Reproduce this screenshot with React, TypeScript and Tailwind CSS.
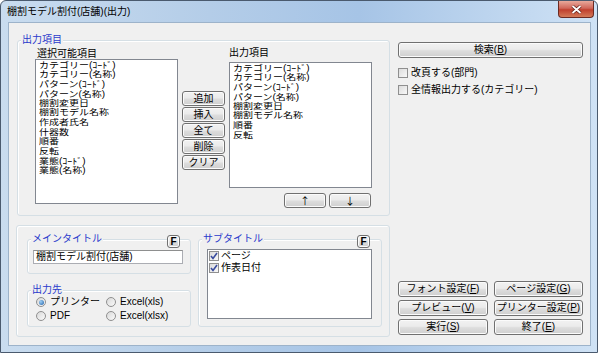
import React from "react";

const leftItems = [
  "カテゴリー(ｺｰﾄﾞ)",
  "カテゴリー(名称)",
  "パターン(ｺｰﾄﾞ)",
  "パターン(名称)",
  "棚割変更日",
  "棚割モデル名称",
  "作成者氏名",
  "什器数",
  "順番",
  "反転",
  "業態(ｺｰﾄﾞ)",
  "業態(名称)",
];

const rightItems = [
  "カテゴリー(ｺｰﾄﾞ)",
  "カテゴリー(名称)",
  "パターン(ｺｰﾄﾞ)",
  "パターン(名称)",
  "棚割変更日",
  "棚割モデル名称",
  "順番",
  "反転",
];

function Btn({ children, className = "" }: { children: React.ReactNode; className?: string }) {
  return (
    <div
      className={`flex items-center justify-center rounded-[3px] border border-[#707070] bg-[linear-gradient(#f2f2f2,#ebebeb_45%,#dddddd_55%,#cfcfcf)] text-[10px] leading-none text-black shadow-[inset_0_0_0_1px_#fbfbfb] ${className}`}
    >
      {children}
    </div>
  );
}

// listbox rows are packed tight in the original, so squash the text a bit
function ListBox({ items, className = "" }: { items: string[]; className?: string }) {
  return (
    <div className={`overflow-hidden border border-[#828790] bg-white pl-[3px] text-black ${className}`}>
      <div className="origin-top scale-y-[0.85] text-[10px] leading-[11.3px]">
        {items.map((it, i) => (
          <div key={i} className="whitespace-nowrap">
            {it}
          </div>
        ))}
      </div>
    </div>
  );
}

function Group({
  label,
  className = "",
  children,
  f,
  fRight = "right-[10px]",
}: {
  label: string;
  className?: string;
  children?: React.ReactNode;
  f?: boolean;
  fRight?: string;
}) {
  return (
    <div className={`relative rounded-[3px] border border-[#d5dfe5] shadow-[inset_1px_1px_0_#ffffff] ${className}`}>
      <span className="absolute left-[3px] top-[-7px] bg-[#f0f0f0] px-[1px] text-[10px] leading-[12px] text-[#2a3acc]">
        {label}
      </span>
      {f && (
        <Btn className={`absolute top-[-5px] h-[13px] w-[13px] font-bold ${fRight}`}>F</Btn>
      )}
      {children}
    </div>
  );
}

function Check({ checked = false }: { checked?: boolean }) {
  return (
    <div className="flex h-[10px] w-[10px] shrink-0 items-center justify-center border border-[#8f8f8f] bg-[linear-gradient(135deg,#dcdcdc,#f8f8f8)]">
      {checked && (
        <svg width="8" height="8" viewBox="0 0 8 8">
          <path d="M1 4 L3 6.5 L7 1" stroke="#3a4c9e" strokeWidth="1.6" fill="none" />
        </svg>
      )}
    </div>
  );
}

function Radio({ checked = false }: { checked?: boolean }) {
  return (
    <div className="flex h-[10px] w-[10px] shrink-0 items-center justify-center rounded-full border border-[#8f8f8f] bg-[linear-gradient(135deg,#d8d8d8,#fafafa)]">
      {checked && <div className="h-[5px] w-[5px] rounded-full bg-[radial-gradient(circle_at_35%_35%,#9fd0f5,#1f5fa8)]" />}
    </div>
  );
}

export default function App() {
  return (
    <div className="h-[353px] w-[600px] overflow-hidden bg-white font-['Liberation_Sans','Noto_Sans_CJK_JP',sans-serif] text-black">
      <div className="relative h-[353px] w-[598px] rounded-t-[6px] border border-[#4a5a6e] bg-[linear-gradient(90deg,#c9dcef,#b4cde8_35%,#a6c4e6_60%,#cfe2f5)]">
        {/* title bar */}
        <div className="flex h-[21px] items-center pl-[6px] text-[10px] leading-none">
          棚割モデル割付(店舗)(出力)
        </div>
        <div className="absolute right-[3px] top-0 flex h-[17px] w-[36px] items-center justify-center rounded-b-[4px] border border-t-0 border-[#6b2a22] bg-[linear-gradient(#e9a99b,#d0675a_45%,#c0402e_55%,#d47a58)]">
          <svg width="11" height="9" viewBox="0 0 11 9">
            <path d="M1.5 1 L9.5 8 M9.5 1 L1.5 8" stroke="#5a1a12" strokeWidth="3.2" />
            <path d="M1.5 1 L9.5 8 M9.5 1 L1.5 8" stroke="#ffffff" strokeWidth="1.8" />
          </svg>
        </div>

        {/* client area */}
        <div className="ml-[7px] flex h-[324px] w-[583px] border border-[#9db3ca] bg-[#f0f0f0]">
          {/* left column */}
          <div className="ml-[7px] flex w-[374px] flex-col">
            <Group label="出力項目" className="ml-[1px] mt-[17px] h-[176px] w-[373px]">
              <div className="flex items-start">
                <div className="ml-[17px] flex w-[143px] flex-col">
                  <div className="mt-[7px] h-[11px] pl-[2px] text-[10px] leading-[11px]">選択可能項目</div>
                  <ListBox items={leftItems} className="h-[145px]" />
                </div>
                <div className="ml-[4px] mt-[50px] flex w-[43px] flex-col gap-[1px]">
                  <Btn className="h-[15px]">追加</Btn>
                  <Btn className="h-[15px]">挿入</Btn>
                  <Btn className="h-[15px]">全て</Btn>
                  <Btn className="h-[15px]">削除</Btn>
                  <Btn className="h-[15px]">クリア</Btn>
                </div>
                <div className="ml-[4px] flex w-[143px] flex-col">
                  <div className="mt-[6px] h-[11px] text-[10px] leading-[11px]">出力項目</div>
                  <ListBox items={rightItems} className="mt-[4px] h-[126px]" />
                  <div className="mt-[5px] flex justify-end gap-[3px] pr-[1px] font-['Noto_Sans_CJK_JP',sans-serif]">
                    <Btn className="h-[15px] w-[42px]">↑</Btn>
                    <Btn className="h-[15px] w-[42px]">↓</Btn>
                  </div>
                </div>
              </div>
            </Group>

            {/* bottom panel */}
            <div className="mt-[9px] flex h-[112px] w-[374px] rounded-[3px] border border-[#d5dfe5] shadow-[inset_1px_1px_0_#ffffff]">
              <div className="ml-[10px] flex w-[164px] flex-col">
                <Group label="メインタイトル" f className="mt-[13px] h-[35px]">
                  <div className="ml-[5px] mt-[10px] flex h-[14px] w-[150px] items-center border border-[#abadb3] border-t-[#8e8f8f] bg-white pl-[2px] text-[10px] leading-none">
                    棚割モデル割付(店舗)
                  </div>
                </Group>
                <Group label="出力先" className="mt-[16px] h-[37px]">
                  <div className="ml-[8px] mt-[6px] flex flex-col gap-[4px] text-[10px] leading-none">
                    <div className="flex items-center">
                      <div className="flex w-[70px] items-center gap-[4px]">
                        <Radio checked />
                        <span>プリンター</span>
                      </div>
                      <div className="flex items-center gap-[4px]">
                        <Radio />
                        <span>Excel(xls)</span>
                      </div>
                    </div>
                    <div className="flex items-center">
                      <div className="flex w-[70px] items-center gap-[4px]">
                        <Radio />
                        <span>PDF</span>
                      </div>
                      <div className="flex items-center gap-[4px]">
                        <Radio />
                        <span>Excel(xlsx)</span>
                      </div>
                    </div>
                  </div>
                </Group>
              </div>
              <Group label="サブタイトル" f fRight="right-[11px]" className="ml-[7px] mt-[13px] h-[88px] w-[184px]">
                <div className="ml-[8px] mt-[9px] flex h-[70px] w-[165px] flex-col border border-[#828790] bg-white pl-[1px] text-[10px] leading-none">
                  <div className="flex h-[12px] items-center gap-[2px]">
                    <Check checked />
                    <span>ページ</span>
                  </div>
                  <div className="flex h-[12px] items-center gap-[2px]">
                    <Check checked />
                    <span>作表日付</span>
                  </div>
                </div>
              </Group>
            </div>
          </div>

          {/* right column */}
          <div className="ml-[8px] flex w-[185px] flex-col text-[10px] leading-none">
            <Btn className="mt-[19px] h-[16px] border-[#3c7fb1] shadow-[inset_0_0_0_1px_#9fd5f5]">
              検索(<u>B</u>)
            </Btn>
            <div className="mt-[10px] flex items-center gap-[3px]">
              <Check />
              <span>改頁する(部門)</span>
            </div>
            <div className="mt-[7px] flex items-center gap-[3px]">
              <Check />
              <span>全情報出力する(カテゴリー)</span>
            </div>
            <div className="mt-[186px] grid grid-cols-[90px_89px] gap-x-[6px] gap-y-[3px]">
              <Btn className="h-[16px]">フォント設定(<u>F</u>)</Btn>
              <Btn className="h-[16px]">ページ設定(<u>G</u>)</Btn>
              <Btn className="h-[16px]">プレビュー(<u>V</u>)</Btn>
              <Btn className="h-[16px]">プリンター設定(<u>P</u>)</Btn>
              <Btn className="h-[16px]">実行(<u>S</u>)</Btn>
              <Btn className="h-[16px]">終了(<u>E</u>)</Btn>
            </div>
          </div>
        </div>
      </div>
    </div>
  );
}
